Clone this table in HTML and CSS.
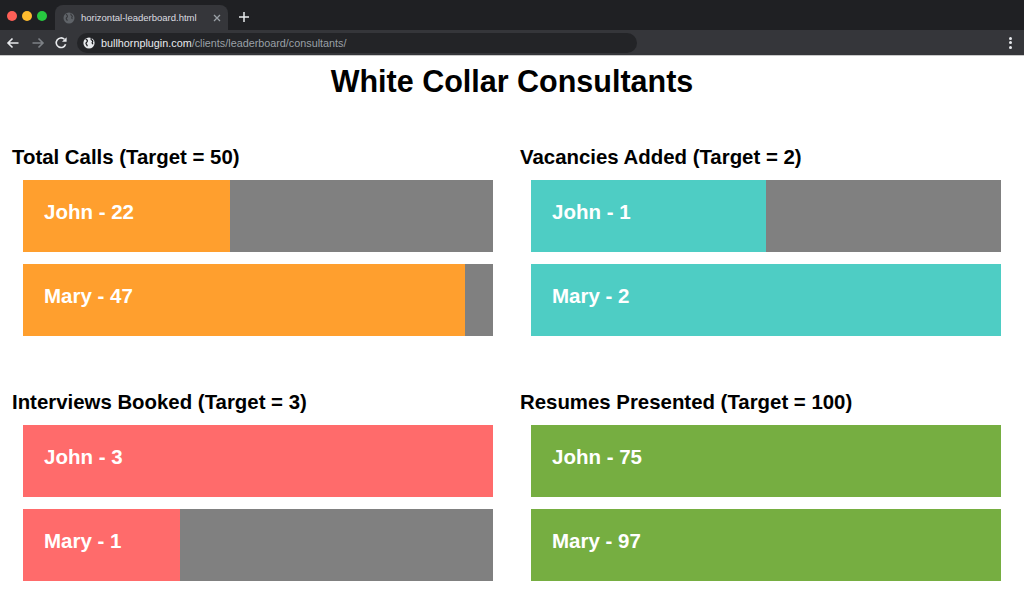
FILE: index.html
```html
<!DOCTYPE html>
<html lang="en">
<head>
<meta charset="utf-8">
<title>horizontal-leaderboard.html</title>
<link rel="stylesheet" href="styles.css">
</head>
<body>
<div class="chrome">
  <div class="tabbar">
    <div class="lights">
      <span class="light light-close"></span>
      <span class="light light-min"></span>
      <span class="light light-max"></span>
    </div>
    <div class="tab">
      <svg class="favicon" width="12" height="12" viewBox="0 0 12 12">
        <circle cx="6" cy="6" r="5.5" fill="#5f6368"/>
        <path d="M3 2.2c1 .6 1.6 1.4 1.4 2.4-.2.9-1.3 1-1.2 2 .1.8 1 1 1 2.2M8.2 1.6c-.5.8-.3 1.5.4 1.8.8.3.9 1.2.4 1.8-.4.5-.2 1.3.6 1.5" stroke="#35363a" stroke-width="1.1" fill="none"/>
      </svg>
      <span class="tab-title">horizontal-leaderboard.html</span>
      <svg class="tab-close" width="10" height="10" viewBox="0 0 10 10">
        <path d="M2 2l6 6M8 2l-6 6" stroke="#9aa0a6" stroke-width="1.3"/>
      </svg>
    </div>
    <svg class="newtab" width="12" height="12" viewBox="0 0 12 12">
      <path d="M6 1v10M1 6h10" stroke="#e8eaed" stroke-width="1.5"/>
    </svg>
  </div>
  <div class="toolbar">
    <span class="btn b-back">
      <svg width="14" height="14" viewBox="0 0 14 14"><path d="M12.5 7H2M6.5 2.5L2 7l4.5 4.5" stroke="#e8eaed" stroke-width="1.6" fill="none"/></svg>
    </span>
    <span class="btn b-fwd">
      <svg width="14" height="14" viewBox="0 0 14 14"><path d="M1.5 7H12M7.5 2.5L12 7l-4.5 4.5" stroke="#7d8186" stroke-width="1.6" fill="none"/></svg>
    </span>
    <span class="btn b-reload">
      <svg width="14" height="14" viewBox="0 0 14 14"><path d="M11.6 8.2A4.8 4.8 0 1 1 10.4 3.3" stroke="#e8eaed" stroke-width="1.6" fill="none"/><path d="M12.6 1.2v4.6H8z" fill="#e8eaed"/></svg>
    </span>
    <div class="omnibox">
      <svg class="globe" width="12" height="12" viewBox="0 0 12 12">
        <circle cx="6" cy="6" r="5.6" fill="#e8eaed"/>
        <path d="M2.6 2c1.2.5 2 1.4 1.7 2.4-.3.9-1.5 1.2-1.3 2.2.2.9 1.2 1 1.2 2.6M8.4 1.2c-.6.9-.3 1.7.5 2 .9.3 1 1.3.5 2-.5.6-.1 1.5.8 1.7" stroke="#202124" stroke-width="1.3" fill="none"/>
      </svg>
      <span class="url"><span class="host">bullhornplugin.com</span>/clients/leaderboard/consultants/</span>
    </div>
    <span class="menu">
      <i></i><i></i><i></i>
    </span>
  </div>
</div>

<main class="page">
  <h1 class="title">White Collar Consultants</h1>
  <div class="board">
    <section class="metric">
      <h2 class="metric-title">Total Calls (Target = 50)</h2>
      <div class="bar"><div class="fill orange" style="width:44%"><span class="label">John - 22</span></div></div>
      <div class="bar"><div class="fill orange" style="width:94%"><span class="label">Mary - 47</span></div></div>
    </section>
    <section class="metric">
      <h2 class="metric-title">Vacancies Added (Target = 2)</h2>
      <div class="bar"><div class="fill teal" style="width:50%"><span class="label">John - 1</span></div></div>
      <div class="bar"><div class="fill teal" style="width:100%"><span class="label">Mary - 2</span></div></div>
    </section>
    <section class="metric">
      <h2 class="metric-title">Interviews Booked (Target = 3)</h2>
      <div class="bar"><div class="fill coral" style="width:100%"><span class="label">John - 3</span></div></div>
      <div class="bar"><div class="fill coral" style="width:33.3333%"><span class="label">Mary - 1</span></div></div>
    </section>
    <section class="metric">
      <h2 class="metric-title">Resumes Presented (Target = 100)</h2>
      <div class="bar"><div class="fill lime" style="width:100%"><span class="label">John - 75</span></div></div>
      <div class="bar"><div class="fill lime" style="width:100%"><span class="label">Mary - 97</span></div></div>
    </section>
  </div>
</main>
</body>
</html>
```

FILE: styles.css
```css
* { box-sizing: border-box; }

html, body {
  margin: 0;
  padding: 0;
  background: #ffffff;
  font-family: "Liberation Sans", Arial, Helvetica, sans-serif;
}

/* ---------- browser chrome ---------- */
.chrome {
  height: 56px;
  background: #202124;
}

.tabbar {
  height: 30px;
  display: flex;
  align-items: flex-end;
  background: #1f2023;
}

.lights {
  display: flex;
  gap: 5px;
  padding-left: 7px;
  align-self: center;
  margin-top: 1px;
}

.light {
  width: 10px;
  height: 10px;
  border-radius: 50%;
  display: block;
}
.light-close { background: #fe5f57; }
.light-min { background: #febb2e; }
.light-max { background: #27c840; }

.tab {
  margin-left: 8px;
  width: 173px;
  height: 25px;
  background: #35363a;
  border-radius: 8px 8px 0 0;
  display: flex;
  align-items: center;
  padding: 0 6px 0 8px;
}

.favicon { flex: none; }

.tab-title {
  margin-left: 6px;
  font-size: 9.5px;
  color: #dcdde0;
  flex: 1;
  white-space: nowrap;
}

.tab-close { flex: none; }

.newtab {
  margin-left: 10px;
  align-self: center;
  margin-top: 3px;
}

.toolbar {
  height: 26px;
  background: #35363a;
  border-bottom: 1px solid #c9c9c9;
  display: flex;
  align-items: center;
}

.btn {
  display: flex;
  justify-content: center;
  align-items: center;
  height: 20px;
}
.b-back { width: 24px; margin-left: 1px; }
.b-fwd { width: 26px; }
.b-reload { width: 20px; }

.omnibox {
  margin-left: 6px;
  width: 560px;
  height: 20px;
  border-radius: 10px;
  background: #232427;
  display: flex;
  align-items: center;
  padding-left: 6px;
}

.globe { flex: none; }

.url {
  margin-left: 6px;
  font-size: 10.8px;
  color: #9aa0a6;
  white-space: nowrap;
}
.host { color: #e8eaed; }

.menu {
  margin-left: auto;
  margin-right: 12px;
  display: flex;
  flex-direction: column;
  gap: 1.5px;
}
.menu i {
  display: block;
  width: 3px;
  height: 3px;
  border-radius: 50%;
  background: #e8eaed;
}

/* ---------- page ---------- */
.page {
  padding: 0 12px;
}

.title {
  margin: 8px 0 0;
  text-align: center;
  font-size: 30.5px;
  line-height: 35px;
  font-weight: bold;
  color: #000;
}

.board {
  margin-top: 47px;
  display: grid;
  grid-template-columns: 1fr 1fr;
  column-gap: 16px;
  row-gap: 55px;
}

.metric-title {
  margin: 0 0 11px;
  font-size: 20.4px;
  line-height: 23px;
  font-weight: bold;
  color: #000;
  white-space: nowrap;
}

.bar {
  margin: 0 11px 12px;
  height: 72px;
  background: #808080;
  display: flex;
}
.bar:last-child { margin-bottom: 0; }

.fill {
  height: 100%;
  padding: 20px 0 0 21px;
  white-space: nowrap;
}

.label {
  font-size: 20.5px;
  line-height: 23px;
  font-weight: bold;
  color: #ffffff;
}

.orange { background: #ff9f2e; }
.teal { background: #4ecdc4; }
.coral { background: #ff6b6b; }
.lime { background: #76ae41; }
```
